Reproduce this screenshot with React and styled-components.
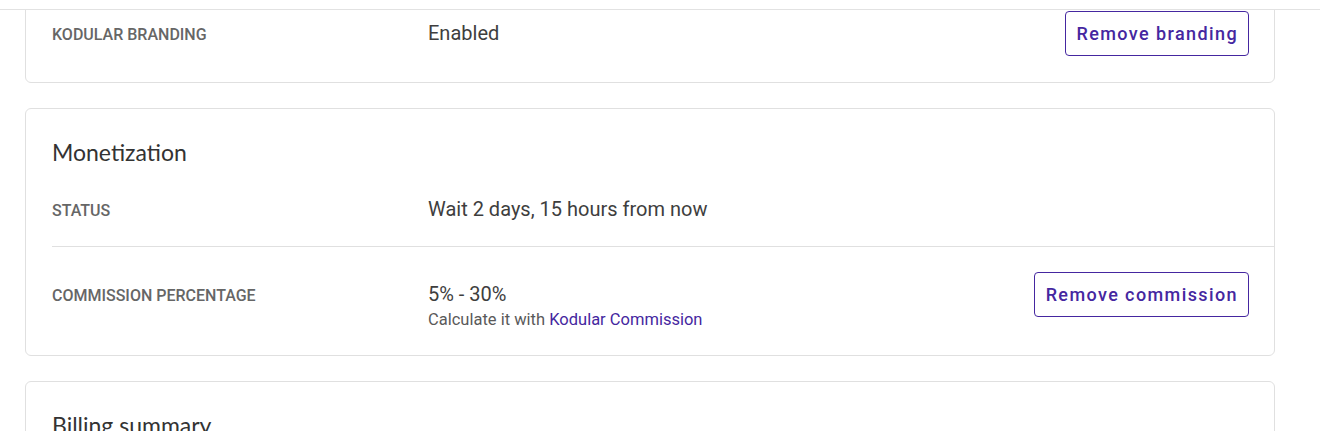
import React from 'react';
import styled, { createGlobalStyle } from 'styled-components';

const Global = createGlobalStyle`
  body {
    margin: 0;
    background: #fff;
    font-family: Roboto, "Liberation Sans", sans-serif;
    overflow: hidden;
  }
`;

const TopBar = styled.div`
  position: fixed;
  top: 0;
  left: 0;
  right: 0;
  height: 9px;
  background: #fff;
  border-bottom: 1px solid #e2e2e2;
  z-index: 10;
`;

const Page = styled.main`
  width: 1250px;
  margin: -15px 0 0 25px;
  display: flex;
  flex-direction: column;
  gap: 25px;
`;

const Card = styled.section`
  border: 1px solid #e0e0e0;
  border-radius: 6px;
  background: #fff;
`;

const Title = styled.h2`
  margin: 0;
  padding: 25px 26px 0;
  font-family: Lato, "Noto Sans", sans-serif;
  font-weight: 400;
  font-size: 23px;
  line-height: 36px;
  color: #333;
`;

const Row = styled.div`
  display: flex;
  align-items: flex-start;
  margin-left: 26px;
  padding: 25px 25px ${(p) => p.bottom ?? 25}px 0;
  border-top: ${(p) => (p.divided ? '1px solid #e0e0e0' : 'none')};
`;

const Label = styled.div`
  width: 376px;
  flex-shrink: 0;
  padding-top: ${(p) => p.offset ?? 10}px;
  font-size: 16px;
  line-height: 28px;
  font-weight: 500;
  text-transform: uppercase;
  color: #666;
`;

const Value = styled.div`
  flex: 1;
  padding-top: ${(p) => p.offset ?? 8}px;
  font-size: 20px;
  line-height: 28px;
  color: #3e3e3e;
`;

const Sub = styled.div`
  margin-top: 1px;
  font-size: 16.5px;
  line-height: 22px;
  color: #5a5a5a;

  a {
    color: #4527a0;
    text-decoration: none;
  }
`;

const Button = styled.button`
  height: 45px;
  padding: 0 10px 0 11px;
  border: 1px solid #4527a0;
  border-radius: 4px;
  background: #fff;
  color: #4527a0;
  font-family: Roboto, "Liberation Sans", sans-serif;
  font-size: 18px;
  font-weight: 500;
  letter-spacing: 1.4px;
  cursor: pointer;
`;

export default function App() {
  return (
    <>
      <Global />
      <TopBar />
      <Page>
        <Card>
          <Row bottom={26}>
            <Label>Kodular branding</Label>
            <Value>Enabled</Value>
            <Button>Remove branding</Button>
          </Row>
        </Card>

        <Card>
          <Title>Monetization</Title>
          <Row bottom={21}>
            <Label offset={2}>Status</Label>
            <Value offset={0}>Wait 2 days, 15 hours from now</Value>
          </Row>
          <Row divided bottom={24}>
            <Label>Commission percentage</Label>
            <Value>
              5% - 30%
              <Sub>
                Calculate it with <a href="#">Kodular Commission</a>
              </Sub>
            </Value>
            <Button>Remove commission</Button>
          </Row>
        </Card>

        <Card>
          <Title>Billing summary</Title>
        </Card>
      </Page>
    </>
  );
}
